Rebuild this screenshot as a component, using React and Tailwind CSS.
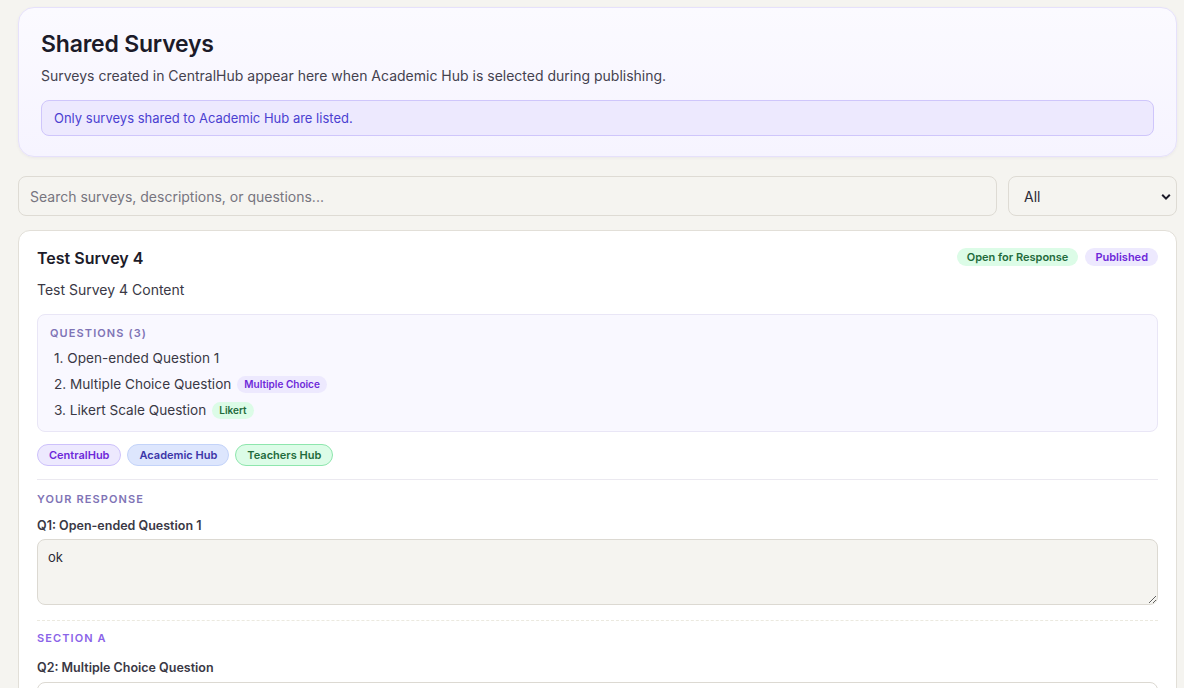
import React from "react";

const questions = [
  { n: 1, text: "Open-ended Question 1", tag: null },
  { n: 2, text: "Multiple Choice Question", tag: "mc" },
  { n: 3, text: "Likert Scale Question", tag: "likert" },
];

const App = () => {
  return (
    <div
      className="min-h-[688px] bg-[#f5f4f0] pl-[18px] pr-[7px] pt-[7px] text-[#1f1d2b]"
      style={{ fontFamily: "Inter, 'Noto Sans', sans-serif" }}
    >
      {/* header */}
      <div className="rounded-[16px] border border-[#e6e1fb] bg-gradient-to-b from-[#fbfaff] to-[#f6f4ff] px-[22px] pt-[22px] pb-[20px] shadow-[0_1px_3px_rgba(60,50,120,0.06)]">
        <h1 className="text-[23px] font-semibold leading-[28px] tracking-[-0.2px] text-[#1c1b29]">
          Shared Surveys
        </h1>
        <p className="mt-[9px] text-[14px] leading-[18px] text-[#44424f]">
          Surveys created in CentralHub appear here when Academic Hub is selected during publishing.
        </p>
        <div className="mt-[15px] rounded-[8px] border border-[#cfc6fb] bg-[#ede9fe] px-[12px] py-[9px] text-[13px] leading-[16px] text-[#4b3fd1]">
          Only surveys shared to Academic Hub are listed.
        </div>
      </div>

      {/* filters */}
      <div className="mt-[19px] flex gap-[11px]">
        <input
          className="h-[40px] flex-1 rounded-[8px] border border-[#dedbd4] bg-[#f5f4f0] px-[11px] text-[14px] text-[#44424f] placeholder:text-[#77757f] outline-none"
          placeholder="Search surveys, descriptions, or questions..."
        />
        <div className="relative h-[40px] w-[169px] rounded-[8px] border border-[#dedbd4] bg-[#f5f4f0]">
          <span className="absolute left-[15px] top-[11px] text-[14px] leading-[18px] text-[#2c2a35]">All</span>
          <svg
            className="absolute right-[5px] top-[16px]"
            width="10"
            height="8"
            viewBox="0 0 10 8"
            fill="none"
          >
            <path d="M1.2 1.8 5 5.6 8.8 1.8" stroke="#1c1b29" strokeWidth="2" />
          </svg>
        </div>
      </div>

      {/* survey card */}
      <div className="mt-[14px] rounded-[12px] border border-[#e2dfd8] bg-white px-[18px] pt-[16px] pb-[20px]">
        <div className="flex items-start justify-between">
          <h2 className="text-[16px] font-semibold leading-[22px] text-[#1c1b29]">Test Survey 4</h2>
          <div className="mt-[1px] flex gap-[7px]">
            <span className="rounded-full bg-[#dcfce7] px-[10px] py-[2px] text-[11px] font-semibold leading-[14px] text-[#1f6b3c]">
              Open for Response
            </span>
            <span className="rounded-full bg-[#ede9fe] px-[10px] py-[2px] text-[11px] font-semibold leading-[14px] text-[#6d28d9]">
              Published
            </span>
          </div>
        </div>
        <p className="mt-[12px] text-[14px] leading-[18px] text-[#3a3845]">Test Survey 4 Content</p>

        <div className="mt-[15px] rounded-[8px] border border-[#e9e6f6] bg-[#f9f8ff] px-[12px] pt-[11px] pb-[8px]">
          <div className="text-[11px] font-semibold uppercase leading-[14px] tracking-[1.1px] text-[#7f74b6]">
            Questions (3)
          </div>
          <ol className="mt-[5px] flex flex-col">
            {questions.map((q) => (
              <li key={q.n} className="flex h-[26px] items-center pl-[4px] text-[13.6px] text-[#3a3845]">
                <span>
                  {q.n}. {q.text}
                </span>
                {q.tag === "mc" && (
                  <span className="ml-[6px] rounded-full bg-[#ede9fe] px-[7px] py-[2px] text-[10px] font-semibold leading-[13px] text-[#6d28d9]">
                    Multiple Choice
                  </span>
                )}
                {q.tag === "likert" && (
                  <span className="ml-[6px] rounded-full bg-[#dcfce7] px-[7px] py-[2px] text-[10px] font-semibold leading-[13px] text-[#1f6b3c]">
                    Likert
                  </span>
                )}
              </li>
            ))}
          </ol>
        </div>

        <div className="mt-[12px] flex gap-[6px]">
          <span className="rounded-full border border-[#cdc1fb] bg-[#ede9fe] px-[11px] py-[3px] text-[11px] font-semibold leading-[14px] text-[#6d28d9]">
            CentralHub
          </span>
          <span className="rounded-full border border-[#c3d3f9] bg-[#dde6fd] px-[11px] py-[3px] text-[11px] font-semibold leading-[14px] text-[#3b35a8]">
            Academic Hub
          </span>
          <span className="rounded-full border border-[#8ee6ad] bg-[#dcfce7] px-[11px] py-[3px] text-[11px] font-semibold leading-[14px] text-[#1f6b3c]">
            Teachers Hub
          </span>
        </div>

        <div className="mt-[13px] border-t border-[#ebe9f0] pt-[12px]">
          <div className="text-[11px] font-semibold uppercase leading-[14px] tracking-[1.1px] text-[#7f74b6]">
            Your Response
          </div>
          <div className="mt-[12px] text-[12.5px] font-semibold leading-[15px] text-[#3a3845]">
            Q1: Open-ended Question 1
          </div>
          <textarea
            className="mt-[6px] block h-[66px] w-full rounded-[8px] border border-[#dcd9d2] bg-[#f5f4f0] px-[10px] py-[8px] text-[13px] text-[#2c2a35] outline-none"
            defaultValue="ok"
          />
          <div className="mt-[15px] border-t border-dashed border-[#ebe9df] pt-[10px]">
            <div className="text-[11px] font-semibold uppercase leading-[14px] tracking-[1.1px] text-[#8a63e8]">
              Section A
            </div>
            <div className="mt-[15px] text-[12.5px] font-semibold leading-[15px] text-[#3a3845]">
              Q2: Multiple Choice Question
            </div>
            <div className="mt-[7px] h-[60px] w-full rounded-[8px] border border-[#dcd9d2] bg-white" />
          </div>
        </div>
      </div>
    </div>
  );
};

export default App;
